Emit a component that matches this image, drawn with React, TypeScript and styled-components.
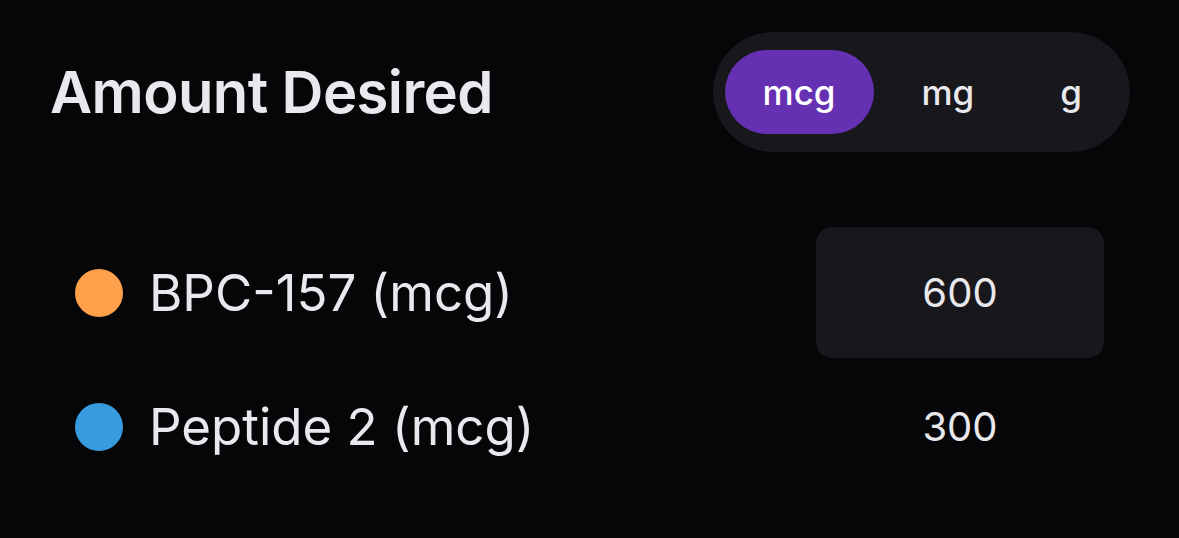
import styled, { createGlobalStyle } from "styled-components";

const GlobalStyle = createGlobalStyle`
  html, body {
    margin: 0;
    padding: 0;
    background: #060608;
  }
  body {
    font-family: Inter, "Noto Sans", "Liberation Sans", sans-serif;
    color: #e8e8ed;
  }
`;

interface Peptide {
  name: string;
  color: string;
  amount: string;
  focused?: boolean;
}

const peptides: Peptide[] = [
  { name: "BPC-157 (mcg)", color: "#ffa04a", amount: "600", focused: true },
  { name: "Peptide 2 (mcg)", color: "#379be0", amount: "300" },
];

const units = ["mcg", "mg", "g"];

const App = () => {
  const selected = "mcg";

  return (
    <Page>
      <GlobalStyle />
      <Header>
        <Title>Amount Desired</Title>
        <Segmented>
          {units.map((unit) => (
            <Segment key={unit} $active={unit === selected}>
              {unit}
            </Segment>
          ))}
        </Segmented>
      </Header>
      <List>
        {peptides.map((p) => (
          <Row key={p.name}>
            <Dot $color={p.color} />
            <Label>{p.name}</Label>
            <ValueBox $focused={p.focused}>{p.amount}</ValueBox>
          </Row>
        ))}
      </List>
    </Page>
  );
};

const Page = styled.div`
  width: 1179px;
  height: 538px;
  box-sizing: border-box;
  padding: 32px 49px 0 50px;
  background: #060608;
  overflow: hidden;
`;

const Header = styled.div`
  display: flex;
  justify-content: space-between;
  align-items: center;
  height: 120px;
`;

const Title = styled.h1`
  margin: 0;
  font-size: 58px;
  font-weight: 600;
  letter-spacing: -0.6px;
  color: #e8e8ed;
`;

const Segmented = styled.div`
  display: flex;
  align-items: center;
  gap: 10px;
  height: 120px;
  box-sizing: border-box;
  padding: 18px 10px 18px 12px;
  border-radius: 60px;
  background: #17171c;
`;

const Segment = styled.div<{ $active?: boolean }>`
  height: 84px;
  display: flex;
  align-items: center;
  justify-content: center;
  padding: 0 38px;
  border-radius: 42px;
  font-size: 35px;
  font-weight: 500;
  color: ${(props) => (props.$active ? "#ffffff" : "#e8e8ed")};
  background: ${(props) => (props.$active ? "#6530b2" : "transparent")};
`;

const List = styled.div`
  display: flex;
  flex-direction: column;
  gap: 3px;
  margin-top: 75px;
  padding: 0 26px 0 25px;
`;

const Row = styled.div`
  display: flex;
  align-items: center;
  height: 131px;
`;

const Dot = styled.span<{ $color: string }>`
  width: 48px;
  height: 48px;
  border-radius: 50%;
  background: ${(props) => props.$color};
  margin-right: 26px;
  flex-shrink: 0;
`;

const Label = styled.span`
  flex: 1;
  font-size: 51px;
  font-weight: 400;
  color: #e8e8ed;
`;

const ValueBox = styled.div<{ $focused?: boolean }>`
  width: 288px;
  height: 131px;
  display: flex;
  align-items: center;
  justify-content: center;
  border-radius: 16px;
  font-size: 40px;
  font-weight: 400;
  color: #e8e8ed;
  background: ${(props) => (props.$focused ? "#17171c" : "transparent")};
`;

export default App;
